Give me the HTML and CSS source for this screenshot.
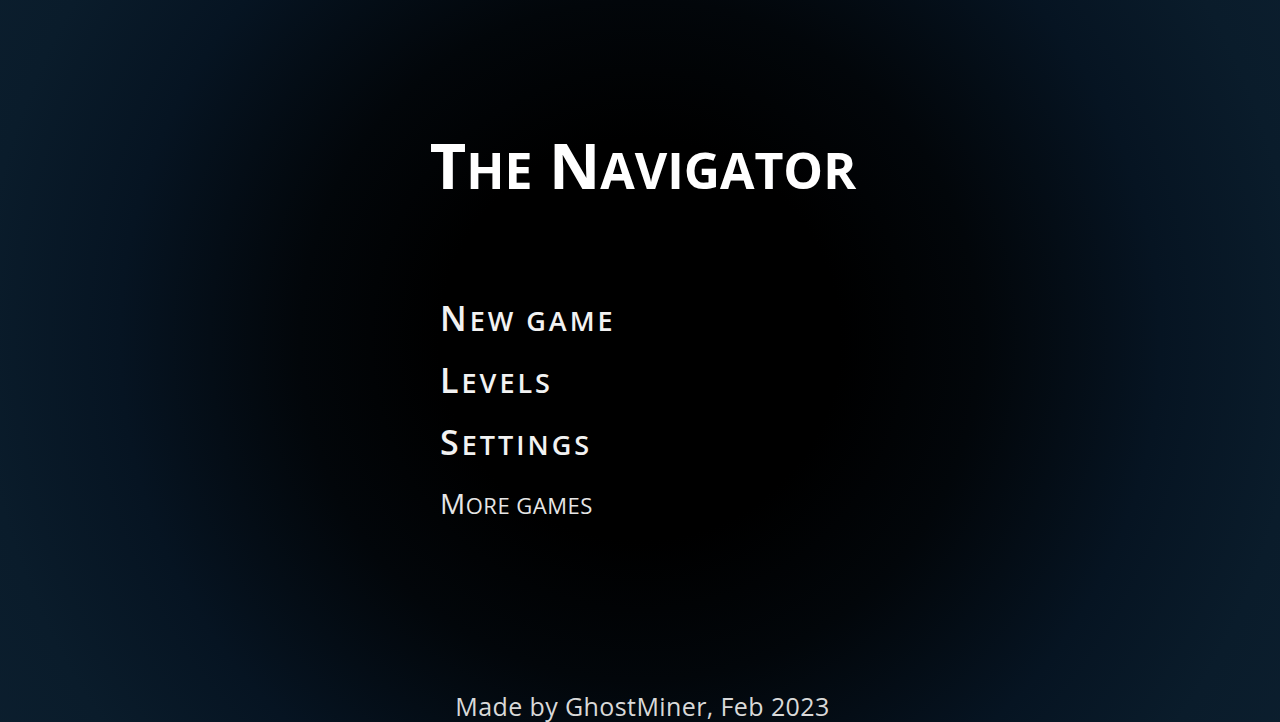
FILE: index.html
```html
<!DOCTYPE html>
<html lang="en">
<head>
<meta charset="utf-8">
<title>The Navigator</title>
<link rel="stylesheet" href="styles.css">
</head>
<body>
<div class="screen">
  <h1 class="title"><span class="cap">T</span><span class="sc">he</span> <span class="cap">N</span><span class="sc">avigator</span></h1>
  <nav class="menu">
    <a class="item"><span class="cap">N</span><span class="sc">ew game</span></a>
    <a class="item"><span class="cap">L</span><span class="sc">evels</span></a>
    <a class="item"><span class="cap">S</span><span class="sc">ettings</span></a>
    <a class="item item-small"><span class="cap">M</span><span class="sc">ore games</span></a>
  </nav>
  <footer class="credits">Made by GhostMiner, Feb 2023</footer>
</div>
</body>
</html>
```
FILE: styles.css
```css
html, body {
  margin: 0;
  padding: 0;
}
body {
  background: #000;
  font-family: "Open Sans", "Noto Sans", sans-serif;
  color: #fff;
}
.screen {
  width: 1280px;
  height: 722px;
  display: flex;
  flex-direction: column;
  align-items: center;
  overflow: hidden;
  background: radial-gradient(circle at 640px 340px, #000 0, #000 200px, #02060a 340px, #061422 520px, #0a1c2b 660px, #0c1f2f 800px);
}
.title {
  margin: 133px 0 0 0;
  font-size: 63px;
  line-height: 64px;
  font-weight: 700;
  letter-spacing: 0;
  color: #fff;
  padding-left: 6px;
}
.title .sc {
  font-size: 50px;
  line-height: 1;
  text-transform: uppercase;
}
.menu {
  width: 400px;
  margin-top: 90px;
  display: flex;
  flex-direction: column;
}
.item {
  display: block;
  font-size: 34px;
  line-height: 62px;
  font-weight: 600;
  letter-spacing: 3px;
  color: #f2f2f2;
}
.item .sc {
  font-size: 27px;
  line-height: 1;
  text-transform: uppercase;
}
.item-small {
  font-size: 28px;
  line-height: 60px;
  font-weight: 400;
  letter-spacing: 0.5px;
  color: #e6e6e6;
}
.item-small .sc {
  font-size: 22px;
}
.credits {
  margin-top: auto;
  margin-bottom: 4px;
  font-size: 25px;
  line-height: 24px;
  letter-spacing: 0.4px;
  color: #d9d9d9;
  padding-left: 5px;
}
```
